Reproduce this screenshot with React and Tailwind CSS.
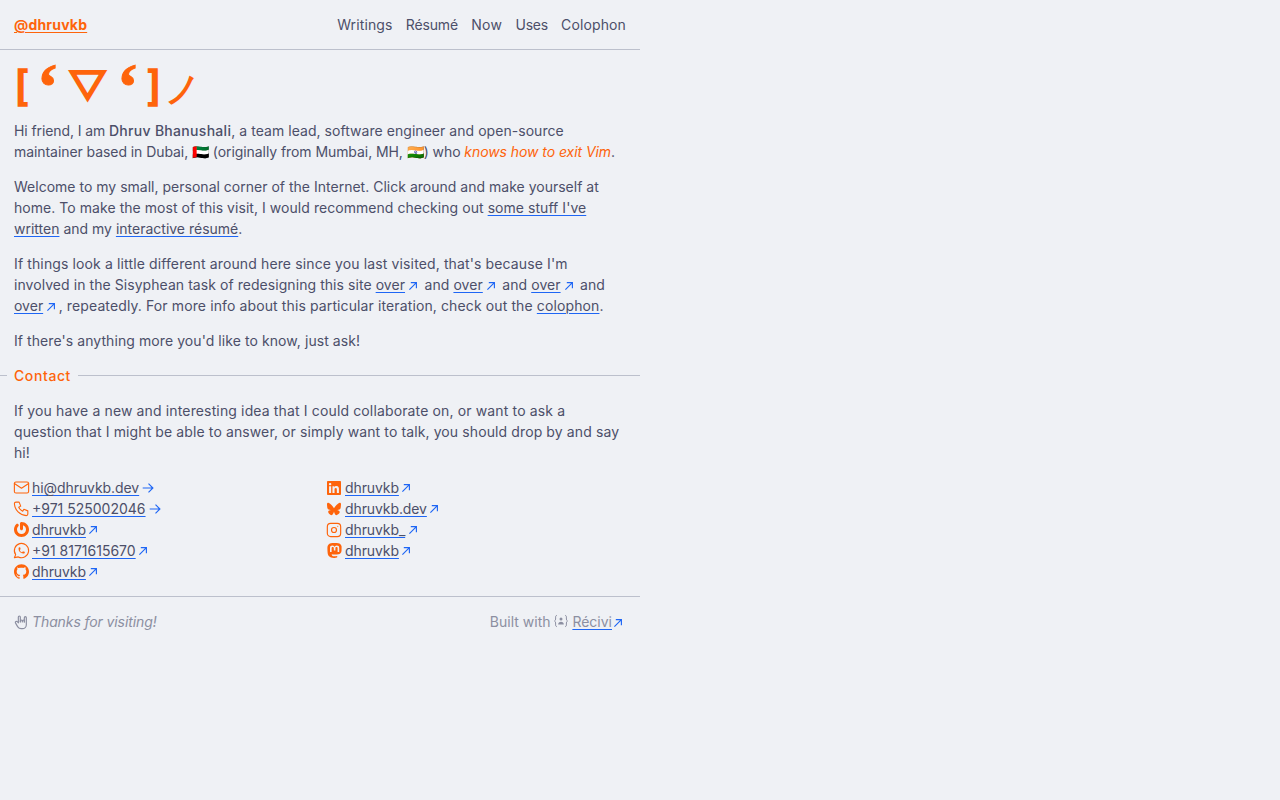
import React from "react";
import { TbMail, TbPhone, TbBrandWhatsapp, TbBrandInstagram } from "react-icons/tb";
import { FaBluesky } from "react-icons/fa6";
import { SiGravatar, SiLinkedin, SiMastodon, SiGithub } from "react-icons/si";

const linkCls = "underline decoration-[#1e66f5] decoration-1 underline-offset-2";

function UpRight({ className }) {
  return (
    <svg viewBox="0 0 12 12" className={className} fill="none" stroke="currentColor" strokeWidth="1.15">
      <path d="M2.4 9.6 9.4 2.6M3.8 2.6h5.6v5.6" />
    </svg>
  );
}

function Right({ className }) {
  return (
    <svg viewBox="0 0 12 12" className={className} fill="none" stroke="currentColor" strokeWidth="1.15">
      <path d="M.7 6h10.2M6.5 1.6 10.9 6l-4.4 4.4" />
    </svg>
  );
}

function Ext({ children, footer }) {
  return (
    <span className="whitespace-nowrap">
      <a className={linkCls}>{children}</a>
      <UpRight className={footer ? "inline-block w-3 h-3 mr-0.5 text-[#1e66f5] align-[-1.5px]" : "inline-block w-3 h-3 ml-0.5 mr-[1.5px] text-[#1e66f5] align-[-1.5px]"} />
    </span>
  );
}

function Row({ icon, text, internal, track = "" }) {
  const Arrow = internal ? Right : UpRight;
  return (
    <li className="flex items-center h-[21px]">
      <span className="flex items-center justify-center w-3.5 h-3.5 text-[#fe640b] shrink-0 mr-1">{icon}</span>
      <a className={`${linkCls} ${track}`}>{text}</a>
      <Arrow className={internal ? "w-3 h-3 ml-[3px] text-[#1e66f5]" : "w-3 h-3 ml-[1.5px] text-[#1e66f5]"} />
    </li>
  );
}

function Rock({ className }) {
  return (
    <svg viewBox="0 0 24 24" className={className} fill="none" stroke="currentColor" strokeWidth="1.75" strokeLinecap="round" strokeLinejoin="round">
      <path d="M11 11.5v-1a1.5 1.5 0 0 1 3 0v1.5" />
      <path d="M17 12v-6.5a1.5 1.5 0 0 1 3 0v10.5a6 6 0 0 1 -6 6h-2h.208a6 6 0 0 1 -5.012 -2.7a69.74 69.74 0 0 1 -.196 -.3c-.312 -.479 -1.407 -2.388 -3.286 -5.728a1.5 1.5 0 0 1 .536 -2.022a1.867 1.867 0 0 1 2.28 .28l1.47 1.47" />
      <path d="M14 10.5a1.5 1.5 0 0 1 3 0v1.5" />
      <path d="M8 13v-8.5a1.5 1.5 0 0 1 3 0v7.5" />
    </svg>
  );
}

function Recivi() {
  return (
    <svg viewBox="0 0 14 14" className="inline-block w-3.5 h-3.5 align-[-1px]" fill="none" stroke="currentColor" strokeWidth="1">
      <path d="M3 1.5c-1.2 0-1.4.6-1.4 1.6v2c0 1-.4 1.5-1.1 1.9.7.4 1.1.9 1.1 1.9v2c0 1 .2 1.6 1.4 1.6" />
      <path d="M11 1.5c1.2 0 1.4.6 1.4 1.6v2c0 1 .4 1.5 1.1 1.9-.7.4-1.1.9-1.1 1.9v2c0 1-.2 1.6-1.4 1.6" />
      <circle cx="7" cy="5" r="1.5" fill="currentColor" stroke="none" />
      <path d="M4.2 10.5c0-1.7 1.2-2.7 2.8-2.7s2.8 1 2.8 2.7z" fill="currentColor" stroke="none" />
    </svg>
  );
}

const Blob = () => <span className="text-[66px] leading-[0px] align-[-8px] font-bold font-['Liberation_Serif',serif] [-webkit-text-stroke:1px_#fe640b]">‘</span>;

export default function App() {
  return (
    <div className="min-h-[800px] bg-[#eff1f5] text-[#4c4f69] text-sm leading-[21px] font-['Inter',sans-serif]">
      <div className="w-[640px]">
        <header className="flex items-center justify-between h-[50px] px-3.5 border-b border-[#bcc0cc]">
          <a className="font-bold text-[#fe640b] underline decoration-1 underline-offset-2 tracking-[0.2px]">@dhruvkb</a>
          <nav className="flex gap-[13.25px]">
            <a className="tracking-[0.12px]">Writings</a>
            <a className="tracking-[-0.15px]">Résumé</a>
            <a className="tracking-[0.3px]">Now</a>
            <a className="tracking-[-0.25px]">Uses</a>
            <a className="tracking-[0.12px]">Colophon</a>
          </nav>
        </header>

        <main className="px-3.5">
          <div className="h-[56px] mb-3.5 text-[#fe640b] text-[42px] leading-[72px] font-bold whitespace-nowrap">
            <span className="mr-[7px]">[</span>
            <Blob />
            <span className="ml-[7px] mr-[7px]">▽</span>
            <Blob />
            <span className="ml-[7px] mr-[3px]">]</span>
            <span className="text-[35px]">ノ</span>
          </div>
          <p className="mb-3.5">
            <span className="tracking-[-0.1px]">Hi friend, I am </span><strong className="font-medium tracking-[0.3px]">Dhruv Bhanushali</strong><span className="tracking-[0.045px]">, a team lead, software engineer and open-source</span><br />
            <span className="tracking-[-0.07px]">maintainer based in Dubai, 🇦🇪 (originally from Mumbai, MH, 🇮🇳) who <em className="text-[#fe640b]">knows how to exit Vim</em>.</span>
          </p>
          <p className="mb-3.5">
            <span className="tracking-[0.01px]">Welcome to my small, personal corner of the Internet. Click around and make yourself at</span><br />
            <span className="tracking-[0.05px]">home. To make the most of this visit, I would recommend checking out <a className={linkCls}>some stuff I've</a></span><br />
            <a className={linkCls}>written</a> and my <a className={linkCls}>interactive résumé</a>.
          </p>
          <p className="mb-3.5">
            <span className="tracking-[0.125px]">If things look a little different around here since you last visited, that's because I'm</span><br />
            <span className="tracking-[0.06px]">involved in the Sisyphean task of redesigning this site <Ext>over</Ext> and <Ext>over</Ext> and <Ext>over</Ext> and</span><br />
            <Ext>over</Ext><span className="tracking-[0.115px]">, repeatedly. For more info about this particular iteration, check out the <a className={linkCls}>colophon</a>.</span>
          </p>
          <p className="tracking-[0.075px]">If there's anything more you'd like to know, just ask!</p>
        </main>

        <h2 className="flex items-center gap-[7px] mt-3.5 mb-3.5 h-[21px] font-medium text-[#fe640b] tracking-[0.6px]">
          <span className="w-[7px] h-px bg-[#bcc0cc]" />
          <span>Contact</span>
          <span className="flex-1 h-px bg-[#bcc0cc]" />
        </h2>

        <section className="px-3.5">
          <p className="mb-3.5">
            <span className="tracking-[0.14px]">If you have a new and interesting idea that I could collaborate on, or want to ask a</span><br />
            <span className="tracking-[0.11px]">question that I might be able to answer, or simply want to talk, you should drop by and say</span><br />
            hi!
          </p>
          <div className="grid grid-cols-2 gap-x-3.5">
            <ul>
              <Row icon={<TbMail className="w-[19px] h-[19px] shrink-0" strokeWidth={1.4} />} text="hi@dhruvkb.dev" internal track="tracking-[-0.07px]" />
              <Row icon={<TbPhone className="w-[19px] h-[19px] shrink-0" strokeWidth={1.4} />} text="+971 525002046" internal />
              <Row icon={<SiGravatar className="w-[15px] h-[15px] shrink-0" />} text="dhruvkb" track="tracking-[-0.1px]" />
              <Row icon={<TbBrandWhatsapp className="w-[19px] h-[19px] shrink-0" strokeWidth={1.4} />} text="+91 8171615670" />
              <Row icon={<SiGithub className="w-[15px] h-[15px] shrink-0" />} text="dhruvkb" track="tracking-[-0.1px]" />
            </ul>
            <ul>
              <Row icon={<SiLinkedin className="w-3.5 h-3.5 shrink-0" />} text="dhruvkb" track="tracking-[-0.1px]" />
              <Row icon={<FaBluesky className="w-3.5 h-3.5 shrink-0" />} text="dhruvkb.dev" track="tracking-[-0.1px]" />
              <Row icon={<TbBrandInstagram className="w-5 h-5 shrink-0" strokeWidth={1.4} />} text="dhruvkb_" track="tracking-[-0.1px]" />
              <Row icon={<SiMastodon className="w-[15px] h-[15px] shrink-0" />} text="dhruvkb" track="tracking-[-0.1px]" />
            </ul>
          </div>
        </section>

        <footer className="flex items-center justify-between mt-3.5 h-[50px] px-3.5 border-t border-[#bcc0cc] text-[#8c8fa1]">
          <span className="flex items-center gap-[3px] italic">
            <Rock className="w-4 h-4 -ml-px" />
            <span className="tracking-[-0.1px]">Thanks for visiting!</span>
          </span>
          <span>
            Built with <Recivi /> <Ext footer>Récivi</Ext>
          </span>
        </footer>
      </div>
    </div>
  );
}
